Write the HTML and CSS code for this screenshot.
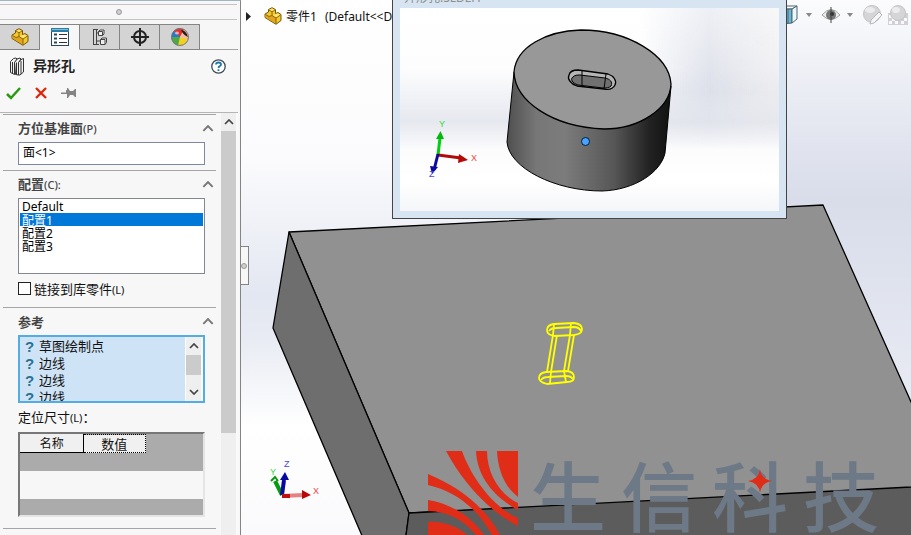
FILE: index.html
```
<!DOCTYPE html>
<html lang="zh-CN">
<head>
  <meta charset="UTF-8">
  <title>异形孔</title>
  <link rel="stylesheet" href="styles.css">
</head>
<body>

  <svg class="defs" width="0" height="0">
    <defs>
      <symbol id="part" viewBox="0 0 18 18">
        <path d="M1 7 L4.500 5 V2.500 L8 .7 L11.500 2.500 V6.500 L14 5.500 L17 7.500 V13.500 L12 17.300 L1 10.500Z" fill="#f5c92c" stroke="#74550b"/>
        <path d="M1.500 7.500 L5 9.500 L8 8.500 L12 11 V16.500 L1.500 10.300Z" fill="#e0a51c"/>
        <path d="M5 3 L8 4.700 L11 3 M8 5 V8.500 L12 11 L16.500 8 M12 11 V17 M1.500 7.500 L5 9.500 L8 8.500" fill="none" stroke="#8b6710"/>
        <path d="M5.500 2.800 L8 1.500 L10.500 2.700 L8 4Z M9 8.300 L13.500 6.500 L15.800 7.800 L12 10.200Z" fill="#ffe477"/>
      </symbol>
      <symbol id="up" viewBox="0 0 10 6">
        <path d="M1 5 L5 1 L9 5" fill="none" stroke="currentColor" stroke-width="1.700"/>
      </symbol>
    </defs>
  </svg>

  <div class="app">
    <aside class="panel">
      <div class="grip"><span class="dot"></span></div>

      <nav class="tabs">
        <button class="tab" aria-label="特征"><svg width="18" height="18"><use href="#part"/></svg></button>
        <button class="tab active" aria-label="属性">
          <svg width="18" height="18" viewBox="0 0 18 18">
            <rect x=".5" y=".5" width="17" height="17" fill="#fff" stroke="#26495c"/>
            <rect x="0" y="0" width="18" height="4" fill="#2b7da5"/>
            <path d="M1 1.500H17" stroke="#82bddb"/>
            <path d="M3 6.500H6M3 10.500H6M3 14.500H6" stroke="#26495c" stroke-width="2"/>
            <path d="M8 6.500H16M8 10.500H16M8 14.500H16" stroke="#333"/>
          </svg>
        </button>
        <button class="tab" aria-label="配置">
          <svg width="16" height="18" viewBox="0 0 16 18" fill="#eee" stroke="#444">
            <path d="M1.500 1V17M1.500 1.500H6M4.500 1.500V16.500M1.500 16.500H7M4.500 5H7M4.500 13H8" fill="none"/>
            <path d="M6.500 3.500 L8 2 H12 V6 L10.500 7.500 H6.500Z M6.500 3.500H10.500V7.500"/>
            <path d="M8.500 11.500 L10 10 H14.500 V14.500 L13 16.500 H8.500Z M8.500 11.500H13V16.500"/>
          </svg>
        </button>
        <button class="tab" aria-label="尺寸">
          <svg width="18" height="18" viewBox="0 0 18 18" fill="none" stroke="#222" stroke-width="2">
            <circle cx="9" cy="9" r="6"/>
            <path d="M9 0V18M0 9H18"/>
          </svg>
        </button>
        <button class="tab" aria-label="外观">
          <svg width="18" height="18" viewBox="0 0 18 18">
            <path d="M9 9 L1 12 A9 9 0 0 1 9 0Z" fill="#2976cf"/>
            <path d="M9 9 L3 3 A9 9 0 0 1 14 2Z" fill="#e3302c"/>
            <path d="M9 9 L13 1 A9 9 0 0 1 17 12Z" fill="#f2bcae"/>
            <path d="M9 9 L17 11 A9 9 0 0 1 6 17.500Z" fill="#f3cf23"/>
            <path d="M9 9 L7 17.700 A9 9 0 0 1 .5 9Z" fill="#4aaa46"/>
            <path d="M10 2 Q15 2 17 9 Q12 7 10 2Z" fill="#2b1b19"/>
            <circle cx="9" cy="9" r="8.500" fill="none" stroke="#777"/>
            <ellipse cx="6" cy="5" rx="2" ry="1.500" fill="#fff" opacity=".6"/>
          </svg>
        </button>
      </nav>

      <header class="title">
        <svg width="16" height="19" viewBox="0 0 16 19" fill="#f2f2f2" stroke="#333">
          <path d="M9.500 5.500 L12 2.500 L14.500 1.500 V15 L11 18 H9.500Z"/>
          <path d="M5.500 5 L8 2 L11 1 L12 2 L9.500 5.500 V18 L6.500 17.500Z"/>
          <path d="M1.500 4.500 L4.500 1.500 L7 1 L8 2 L5.500 5.500 V17.500 L1.500 15.500Z M3.500 5V16.500 M7.500 5.500V17.500 M12 4V17"/>
        </svg>
        <h1>异形孔</h1>
        <button class="icon-btn" aria-label="帮助">
          <svg width="15" height="15" viewBox="0 0 15 15">
            <circle cx="7.500" cy="7.500" r="6.700" fill="#fff" stroke="#3d4d57" stroke-width="1.300"/>
            <path d="M5 5.500 Q5.200 3.500 7.500 3.500 Q10 3.500 10 5.500 Q10 6.500 8.500 7.300 Q7.500 8 7.500 9 M7.500 10.300V12" fill="none" stroke="#1f74a8" stroke-width="1.800"/>
          </svg>
        </button>
      </header>

      <div class="actions">
        <button class="icon-btn" aria-label="确定">
          <svg width="15" height="13" viewBox="0 0 15 13"><path d="M1 7 L5 11 L14 1" fill="none" stroke="#2b9a12" stroke-width="2.500"/></svg>
        </button>
        <button class="icon-btn" aria-label="取消">
          <svg width="12" height="12" viewBox="0 0 12 12"><path d="M1 1 L11 11 M11 1 L1 11" stroke="#e02408" stroke-width="2.300"/></svg>
        </button>
        <button class="icon-btn" aria-label="保持可见">
          <svg width="15" height="10" viewBox="0 0 15 10"><path d="M0 4.500H5V2H6V0H7L9 3H12L14 1H15V9H14L12 7H9L7 10H6V6H0Z" fill="#858585"/></svg>
        </button>
      </div>

      <div class="scroll-area">
        <div class="groups">
          <section class="group">
            <h2><label for="plane">方位基准面<small>(P)</small></label><svg width="12" height="7"><use href="#up"/></svg></h2>
            <input class="field" type="text" id="plane" value="面&lt;1&gt;">
          </section>

          <section class="group config">
            <h2><label for="config">配置<small>(C):</small></label><svg width="12" height="7"><use href="#up"/></svg></h2>
            <select class="config-list" id="config" size="5">
              <option>Default</option>
              <option selected>配置1</option>
              <option>配置2</option>
              <option>配置3</option>
            </select>
            <label class="check"><input type="checkbox"><span>链接到库零件<small>(L)</small></span></label>
          </section>

          <section class="group refs">
            <h2><span>参考</span><svg width="12" height="7"><use href="#up"/></svg></h2>
            <div class="ref-box">
              <ul>
                <li><b>?</b>草图绘制点</li>
                <li><b>?</b>边线</li>
                <li><b>?</b>边线</li>
                <li><b>?</b>边线</li>
              </ul>
              <div class="scrollbar small">
                <button aria-label="向上"><svg width="10" height="6"><use href="#up"/></svg></button>
                <div class="thumb"></div>
                <button aria-label="向下"><svg class="flip" width="10" height="6"><use href="#up"/></svg></button>
              </div>
            </div>
            <p class="caption">定位尺寸<small>(L)</small>：</p>
            <div class="grid">
              <table>
                <tr><th>名称</th><th class="focused">数值</th></tr>
              </table>
              <div class="blank"></div>
            </div>
          </section>
          <section class="group"></section>
        </div>
        <div class="scrollbar">
          <button aria-label="向上"><svg width="10" height="6"><use href="#up"/></svg></button>
          <div class="thumb"></div>
        </div>
      </div>
    </aside>

    <main class="view">
      <svg class="scene" viewBox="241 0 670 535" preserveAspectRatio="xMinYMin slice">
        <defs>
          <linearGradient id="sky" x1="0" y1="0" x2="0" y2="1">
            <stop offset="0" stop-color="#fff"/>
            <stop offset=".3" stop-color="#fbfbfd"/>
            <stop offset=".55" stop-color="#e3e7f1"/>
            <stop offset=".63" stop-color="#e8ebf3"/>
            <stop offset=".8" stop-color="#fff"/>
            <stop offset="1" stop-color="#fafafc"/>
          </linearGradient>
          <linearGradient id="haze" x1="0" y1="0" x2="0" y2="1">
            <stop offset="0" stop-color="#d9ddea" stop-opacity=".1"/>
            <stop offset=".5" stop-color="#d9ddea"/>
            <stop offset="1" stop-color="#e8ebf3"/>
          </linearGradient>
        </defs>
        <rect x="241" width="670" height="535" fill="url(#sky)"/>
        <rect x="780" width="131" height="400" fill="url(#haze)"/>

        <g stroke="#000" stroke-width="1.300" stroke-linejoin="round">
          <path d="M289 232 L823 205 L950 489 L409 513Z" fill="#919191"/>
          <path d="M289 232 L409 513 L400 580 L381 580 L273 328Z" fill="#6e6e6e"/>
          <path d="M409 513 L950 485 V580 H400Z" fill="#5c5c5c"/>
        </g>

        <g fill="none" stroke="#ff0" stroke-width="1.800">
          <path d="M554 324 L574 323 Q582 324 582 329 Q582 334 574 335 L555 336 Q547 335 547 330 Q547 325 554 324Z"/>
          <path d="M549 331 Q551 328 556 328 L574 327 Q579 327 581 331"/>
          <path d="M546 372 L567 371 Q574 372 574 377 Q574 382 567 382 L547 384 Q539 382 539 378 Q539 373 546 372Z"/>
          <path d="M541 380 Q543 377 548 377 L566 376 Q571 376 573 379"/>
          <path d="M553 335 L547 372 M557 335 L551 372 M570 335 L564 371 M574 335 L568 371 M554 324 L553 335 M571 323 L570 335 M551 372 L550 383 M564 371 L566 382"/>
        </g>

        <g fill="none" stroke-width="4">
          <path d="M282 495 L275 481" stroke="#079b10"/>
          <path d="M271 481 L275 477 L278 481" stroke="#079b10" stroke-width="2"/>
          <path d="M282 495 L284 480" stroke="#0909a0"/>
          <path d="M280 480 L285 472 L289 480Z" fill="#0909a0" stroke="none"/>
          <path d="M282 496 L303 495" stroke="#e88282"/>
          <path d="M282 496 H290" stroke="#bc1010"/>
          <path d="M302 490 L311 495 L302 499Z" fill="#b80808" stroke="none"/>
        </g>
        <g class="axis">
          <text class="y" x="270" y="475">Y</text>
          <text class="z" x="284" y="467">Z</text>
          <text class="x" x="313" y="494">X</text>
        </g>
      </svg>

      <div class="tree">
        <svg width="5" height="9" viewBox="0 0 5 9"><path d="M0 0 L5 4.500 L0 9Z" fill="#222"/></svg>
        <svg width="18" height="18"><use href="#part"/></svg>
        <span>零件1</span>
        <span>(Default&lt;&lt;D</span>
      </div>

      <div class="toolbar">
        <svg width="18" height="20" viewBox="0 0 18 20" stroke="#4b6470">
          <path d="M1 4 L6 1 H16 L11 4Z" fill="#fff"/>
          <path d="M1 4 H11 V18 L1 19Z" fill="#68b7d9"/>
          <path d="M11 4 L16 1 V14 L11 18Z M7 4V18" fill="#eef8fc"/>
        </svg>
        <svg class="drop" width="6" height="4" viewBox="0 0 6 4"><path d="M0 0H6L3 4Z" fill="#888"/></svg>
        <svg width="18" height="16" viewBox="0 0 18 16">
          <path d="M0 8 Q9 -3 18 8 Q9 17 0 8Z" fill="#eee" stroke="#a0a0a0"/>
          <circle cx="9" cy="8" r="5" fill="#777"/>
          <circle cx="10" cy="7" r="2" fill="#333"/>
          <path d="M9 0V16" stroke="#444"/>
        </svg>
        <svg class="drop" width="6" height="4" viewBox="0 0 6 4"><path d="M0 0H6L3 4Z" fill="#888"/></svg>
        <svg class="ball" width="20" height="20" viewBox="0 0 20 20">
          <circle cx="9" cy="9" r="8.500" fill="#d4d5d7" stroke="#c4c4c8"/>
          <ellipse cx="7" cy="5" rx="5" ry="3" fill="#ececee"/>
          <path d="M7 19 L8 15 L16 7 L19 10 L11 18Z" fill="#f5f5f7" stroke="#b7b7bb"/>
        </svg>
        <svg class="ball last" width="20" height="20" viewBox="0 0 20 20">
          <path d="M0 8H20V20H0Z" fill="#d1d1d5"/>
          <path d="M1 10H4V13H7V16H4V19H1V16H4V13H1Z M13 16H16V13H19V16H16V19H13Z M7 16H10V19H7Z" fill="#fafafa"/>
          <circle cx="10" cy="8" r="7.500" fill="#d4d5d7" stroke="#c4c4c8"/>
          <ellipse cx="8" cy="5" rx="4" ry="3" fill="#ececee"/>
        </svg>
      </div>

      <div class="side-handle"><span class="dot"></span></div>

      <div class="preview">
        <div class="preview-title">异形孔.SLDLFP</div>
        <svg viewBox="400 8 379 203">
          <defs>
            <linearGradient id="pv" x1="0" y1="0" x2="0" y2="1">
              <stop offset="0" stop-color="#fff"/>
              <stop offset=".3" stop-color="#fdfdfe"/>
              <stop offset=".56" stop-color="#e6e8ef"/>
              <stop offset=".7" stop-color="#fcfcfd"/>
              <stop offset=".85" stop-color="#fff"/>
              <stop offset="1" stop-color="#f5f6f9"/>
            </linearGradient>
            <linearGradient id="pvHaze">
              <stop offset="0" stop-color="#dcdfe9" stop-opacity="0"/>
              <stop offset=".5" stop-color="#dcdfe9"/>
              <stop offset="1" stop-color="#e6e6ea" stop-opacity=".6"/>
            </linearGradient>
            <linearGradient id="pvFade" x1="0" y1="0" x2="0" y2="1">
              <stop offset="0" stop-color="#777"/>
              <stop offset=".6" stop-color="#fff"/>
              <stop offset="1" stop-color="#000"/>
            </linearGradient>
            <mask id="pvMask"><rect x="640" y="8" width="139" height="140" fill="url(#pvFade)"/></mask>
            <linearGradient id="side">
              <stop offset="0" stop-color="#4f4f4f"/>
              <stop offset=".18" stop-color="#777"/>
              <stop offset=".35" stop-color="#7c7c7c"/>
              <stop offset=".65" stop-color="#575757"/>
              <stop offset=".87" stop-color="#222"/>
              <stop offset="1" stop-color="#111"/>
            </linearGradient>
          </defs>
          <rect x="400" y="8" width="379" height="203" fill="url(#pv)"/>
          <rect x="640" y="8" width="139" height="140" fill="url(#pvHaze)" mask="url(#pvMask)"/>
          <path d="M514 72 L507 142 C509 168 555 191 602 191 C635 190 661 172 665 153 L671 86Z" fill="url(#side)" stroke="#000"/>
          <path d="M514 72 C516 47 546 31 581 30 C628 30 669 55 671 84 C670 109 639 129 604 129 C552 127 515 101 514 72Z" fill="#989898" stroke="#000" stroke-width="1.300"/>
          <path d="M578 70 L608 74 C614 76 617 81 615 85 C613 89 609 90 604 89 L577 86 C571 84 567 79 569 75 C570 71 573 70 578 70Z" fill="#b5b5b5" stroke="#000" stroke-width="1.300"/>
          <path d="M580 75 L605 78 C610 79 613 82 611 86 C609 88 606 88 603 88 L578 85 C572 83 570 79 573 77 C575 75 577 75 580 75Z" fill="#707070" stroke="#000"/>
          <path d="M582 70V85M606 74L604 89" stroke="#000"/>
          <circle cx="585.500" cy="141.500" r="4" fill="#4aa3ff" stroke="#001a33"/>
          <g fill="none" stroke-width="3">
            <path d="M438 155 L440 138" stroke="#00d010"/>
            <path d="M436 139 L440.500 131 L444 139Z" fill="#00b90c" stroke="none"/>
            <path d="M438 155 L461 158" stroke="#b40909"/>
            <path d="M459 154 L468 160 L458 163Z" fill="#b40909" stroke="none"/>
            <path d="M438 154 L434 170" stroke="#0909a0"/>
            <path d="M430 166 L438 167 L432 174Z" fill="#0909a0" stroke="none"/>
          </g>
          <g class="axis">
            <text class="y" x="439" y="127">Y</text>
            <text class="x" x="471" y="161">X</text>
            <text class="z" x="429" y="177">Z</text>
          </g>
        </svg>
      </div>

      <div class="watermark">
        <svg width="90" height="84" viewBox="0 0 90 84" fill="#e02d18">
          <path d="M18 0H34C43 26 66 57 90 67V75C60 60 34 30 18 0Z"/>
          <path d="M48 0H59C59 22 71 43 90 52V59C64 45 49 24 48 0Z"/>
          <path d="M69 0H90V46C77 36 70 20 69 0Z"/>
          <path d="M0 23C32 36 59 58 72 84H64C49 57 27 40 0 34Z"/>
          <path d="M0 49C24 53 44 66 56 84H48C36 69 19 60 0 60Z"/>
          <path d="M0 71C14 70 29 75 39 84H0Z"/>
        </svg>
        <div class="brand"><span>生</span><span>信</span><span>科</span><span>技</span></div>
        <svg class="star" width="24" height="24" viewBox="0 0 24 24"><path d="M12 0Q13 10 24 12Q13 14 12 24Q11 14 0 12Q11 10 12 0Z" fill="#e02d18"/></svg>
      </div>
    </main>
  </div>

</body>
</html>
```
FILE: styles.css
```
* {
  box-sizing: border-box;
}

body {
  margin: 0;
  font-family: "Noto Sans", "Noto Sans CJK SC", sans-serif;
  font-size: 13px;
  color: #111;
}

button {
  padding: 0;
  border: none;
  background: none;
}

svg {
  flex: none;
}

.defs {
  position: absolute;
}

.app {
  display: flex;
  height: 100vh;
  overflow: hidden;
}

/* left property panel */
.panel {
  width: 241px;
  flex: none;
  display: flex;
  flex-direction: column;
  background: #f7f7f7;
  border-top: 1px solid #9fb5c1;
  border-right: 1px solid #848484;
}

.grip {
  height: 16px;
  margin: 3px 3px 4px 0;
  display: flex;
  align-items: center;
  justify-content: center;
  border-top: 1px solid #c3c3c3;
  border-bottom: 1px solid #c3c3c3;
}

.dot {
  width: 6px;
  height: 6px;
  border: 1px solid #999;
  border-radius: 50%;
  background: #d0d0d0;
}

.tabs {
  display: flex;
  height: 26px;
  margin-right: 2px;
  border-bottom: 1px solid #a5a5a5;
}

.tab {
  width: 40px;
  height: 26px;
  display: flex;
  align-items: center;
  justify-content: center;
  background: #d4d4d4;
  border: 1px solid #858585;
  border-left: none;
}

.tab.active {
  background: #f7f7f7;
  border-bottom-color: #f7f7f7;
}

.title {
  display: flex;
  align-items: center;
  height: 32px;
  padding: 0 14px 0 9px;
  gap: 8px;
}

.title h1 {
  flex: 1;
  margin: 0;
  font-size: 14px;
  line-height: 20px;
  color: #222;
}

.icon-btn {
  display: flex;
}

.actions {
  display: flex;
  align-items: center;
  gap: 14px;
  height: 22px;
  padding-left: 6px;
}

.scroll-area {
  flex: 1;
  min-height: 0;
  margin: 8px 2px 0 0;
  display: flex;
  justify-content: space-between;
  border-top: 1px solid #b5b5b5;
}

.groups {
  width: 213px;
  margin: 1px 0 0 3px;
}

.group {
  border-top: 1px solid #a5a5a5;
  padding: 0 11px 5px 15px;
}

.group h2 {
  display: flex;
  align-items: center;
  justify-content: space-between;
  height: 27px;
  margin: 0 -9px 0 0;
  font-size: 13px;
  line-height: 18px;
  color: #444;
}

.group h2 svg {
  color: #777;
}

small {
  font-size: 11px;
  font-weight: normal;
}

.group h2 small {
  font-weight: 500;
}

.field {
  display: block;
  width: 100%;
  height: 23px;
  padding: 0 4px 3px;
  border: 1px solid #7f88a3;
  background: #fff;
  font: 12px/18px "Noto Sans", "Noto Sans CJK SC", sans-serif;
  color: #000;
}

.config {
  padding-bottom: 10px;
}

.config-list {
  display: block;
  width: 100%;
  height: 76px;
  padding: 1px;
  border: 1px solid #828790;
  border-radius: 0;
  background: #fff;
  overflow: hidden;
  outline: none;
  font: 12px/13px "Noto Sans", "Noto Sans CJK SC", sans-serif;
}

.config-list option {
  display: flex;
  align-items: center;
  height: 13px;
  min-height: 13px;
  padding: 0 2px;
  font-size: 12px;
  line-height: 13px;
  color: #000;
}

.config-list option:checked {
  background: #0078d7 linear-gradient(#0078d7, #0078d7);
  -webkit-text-fill-color: #fff;
}

.check {
  display: flex;
  align-items: center;
  gap: 3px;
  height: 18px;
  margin-top: 5px;
}

.check input {
  appearance: none;
  width: 13px;
  height: 13px;
  margin: 0;
  border: 1px solid #222;
  background: #fff;
}

.ref-box {
  display: flex;
  height: 68px;
  border: 2px solid #54ade2;
  background: #cfe3f7;
  overflow: hidden;
}

.ref-box ul {
  flex: 1;
  margin: 0;
  padding: 1px 0 0 5px;
  list-style: none;
}

.ref-box li {
  display: flex;
  align-items: center;
  height: 17px;
  line-height: 17px;
}

.ref-box b {
  width: 14px;
  font-family: "Liberation Sans", sans-serif;
  font-size: 15px;
  color: #277293;
}

.scrollbar {
  width: 17px;
  display: flex;
  flex-direction: column;
  align-items: center;
  border-right: 2px solid #fafafa;
  background: #efefef;
  color: #444;
}

.scrollbar button {
  width: 100%;
  height: 18px;
  display: flex;
  align-items: center;
  justify-content: center;
  color: inherit;
}

.scrollbar .thumb {
  width: 100%;
  height: 302px;
  background: #cbcbcb;
}

.scrollbar.small {
  width: 18px;
  border-left: 1px solid #fff;
}

.scrollbar.small .thumb {
  height: 20px;
  margin-bottom: 8px;
}

.flip {
  transform: rotate(180deg);
}

.caption {
  height: 29px;
  margin: 0;
  line-height: 29px;
}

.grid {
  height: 85px;
  margin-bottom: 6px;
  display: flex;
  flex-direction: column;
  border: 2px solid;
  border-color: #777 #e5e5e5 #e5e5e5 #777;
  background: #ababab;
}

.grid table {
  width: 126px;
  table-layout: fixed;
  border-collapse: collapse;
}

.grid th {
  height: 18px;
  padding: 0;
  border: 1px solid #000;
  border-top-color: #f0f0f0;
  border-left-color: #f0f0f0;
  background: #f0f0f0;
  font-size: 12px;
  font-weight: normal;
  line-height: 16px;
}

.grid th.focused {
  border: 1px dotted #000;
  font-size: 13px;
}

.blank {
  height: 28px;
  margin-top: 18px;
  background: #f7f7f7;
}

/* graphics area */
.view {
  position: relative;
  flex: 1;
  min-width: 0;
  overflow: hidden;
}

.scene {
  display: block;
  width: 100%;
  height: 100%;
}

.axis {
  font-family: "Liberation Sans", sans-serif;
  font-size: 9px;
}

.axis .x {
  fill: #ef4444;
}

.axis .y {
  fill: #2fdc3a;
}

.axis .z {
  fill: #4646e8;
}

.tree {
  position: absolute;
  top: 6px;
  left: 5px;
  display: flex;
  align-items: center;
  height: 20px;
  font-size: 12px;
  white-space: nowrap;
}

.tree svg + svg {
  margin: 0 4px 0 13px;
}

.tree span + span {
  margin-left: 8px;
}

.toolbar {
  position: absolute;
  top: 5px;
  right: 3px;
  display: flex;
  align-items: center;
  height: 20px;
}

.toolbar .drop {
  margin: 0 10px 0 7px;
}

.toolbar .ball.last {
  margin-left: 5px;
}

.side-handle {
  position: absolute;
  top: 246px;
  left: -1px;
  width: 9px;
  height: 39px;
  display: flex;
  align-items: center;
  justify-content: center;
  border: 1px solid #848484;
  border-left: none;
  background: #f7f7f7;
}

.side-handle .dot {
  flex: none;
}

.preview {
  position: absolute;
  top: 0;
  left: 151px;
  width: 395px;
  border: 1px solid #444;
  border-top: none;
  padding: 0 7px 7px;
  background: #d7e4f1;
}

.preview svg {
  display: block;
  width: 100%;
}

.preview-title {
  display: flex;
  align-items: flex-end;
  height: 8px;
  padding: 0 0 3px 4px;
  overflow: hidden;
  font-size: 12px;
  line-height: 14px;
  color: #8d8d8d;
}

.watermark {
  position: absolute;
  left: 187px;
  bottom: 0;
  display: flex;
  align-items: flex-end;
  gap: 12px;
}

.brand {
  display: flex;
  gap: 15px;
  padding-bottom: 4px;
  font-family: "Noto Sans CJK SC", sans-serif;
  font-size: 76px;
  font-weight: 500;
  line-height: 76px;
  color: #6d7987;
}

.star {
  position: absolute;
  top: 18px;
  left: 320px;
}
```
